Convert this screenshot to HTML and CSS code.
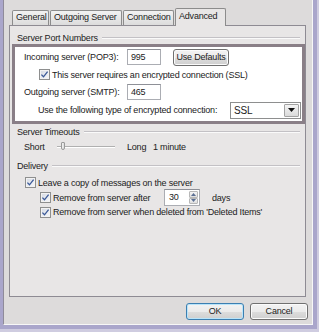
FILE: index.html
```html
<!DOCTYPE html>
<html lang="en">
<head>
    <meta charset="UTF-8">
    <meta name="viewport" content="width=device-width, initial-scale=1.0">
    <title>Advanced</title>
    <link rel="stylesheet" href="styles.css">
</head>
<body>
    <div class="frame">
        <div class="window">
            <div class="client">
                <div class="tabs">
                    <div class="tab tab-general">General</div>
                    <div class="tab tab-outgoing">Outgoing Server</div>
                    <div class="tab tab-connection">Connection</div>
                    <div class="tab tab-advanced active">Advanced</div>
                </div>

                <div class="page">
                    <div class="group-title"><span>Server Port Numbers</span><div class="rule"></div></div>
                    <div class="highlight">
                        <div class="hl-row r-incoming">
                            <span class="port-label">Incoming server (POP3):</span>
                            <span class="field">995</span>
                            <span class="btn btn-defaults">Use Defaults</span>
                        </div>
                        <div class="hl-row r-ssl">
                            <span class="box"><svg width="9" height="9" viewBox="0 0 9 9"><path d="M1.4 4.6 L3.5 6.8 L7.6 1.6" fill="none" stroke="#3c5a98" stroke-width="1.3"/></svg></span>
                            <span>This server requires an encrypted connection (SSL)</span>
                        </div>
                        <div class="hl-row r-outgoing">
                            <span class="port-label">Outgoing server (SMTP):</span>
                            <span class="field">465</span>
                        </div>
                        <div class="hl-row r-type">
                            <span>Use the following type of encrypted connection:</span>
                            <span class="select">
                                <span class="select-val">SSL</span>
                                <span class="select-arrow"><svg width="7" height="4" viewBox="0 0 7 4"><path d="M0 0 H7 L3.5 4 Z" fill="#111"/></svg></span>
                            </span>
                        </div>
                    </div>

                    <div class="group-title gt-timeouts"><span>Server Timeouts</span><div class="rule"></div></div>
                    <div class="timeouts">
                        <span class="t-short">Short</span>
                        <div class="track"><span class="thumb"></span></div>
                        <span class="t-long">Long</span>
                        <span>1 minute</span>
                    </div>

                    <div class="group-title gt-delivery"><span>Delivery</span><div class="rule"></div></div>
                    <div class="check-row dl-leave">
                        <span class="box"><svg width="9" height="9" viewBox="0 0 9 9"><path d="M1.4 4.6 L3.5 6.8 L7.6 1.6" fill="none" stroke="#3c5a98" stroke-width="1.3"/></svg></span>
                        <span>Leave a copy of messages on the server</span>
                    </div>
                    <div class="check-row dl-after">
                        <span class="box"><svg width="9" height="9" viewBox="0 0 9 9"><path d="M1.4 4.6 L3.5 6.8 L7.6 1.6" fill="none" stroke="#3c5a98" stroke-width="1.3"/></svg></span>
                        <span class="after-label">Remove from server after</span>
                        <span class="spin">
                            <span class="spin-val">30</span>
                            <span class="spin-btns">
                                <span class="spin-btn"><svg width="5" height="3" viewBox="0 0 5 3"><path d="M0 3 H5 L2.5 0 Z" fill="#5b6f93"/></svg></span>
                                <span class="spin-btn"><svg width="5" height="3" viewBox="0 0 5 3"><path d="M0 0 H5 L2.5 3 Z" fill="#5b6f93"/></svg></span>
                            </span>
                        </span>
                        <span class="days">days</span>
                    </div>
                    <div class="check-row dl-deleted">
                        <span class="box"><svg width="9" height="9" viewBox="0 0 9 9"><path d="M1.4 4.6 L3.5 6.8 L7.6 1.6" fill="none" stroke="#3c5a98" stroke-width="1.3"/></svg></span>
                        <span>Remove from server when deleted from 'Deleted Items'</span>
                    </div>
                </div>

                <div class="actions">
                    <span class="btn btn-dialog btn-ok">OK</span>
                    <span class="btn btn-dialog">Cancel</span>
                </div>
            </div>
        </div>
    </div>
</body>
</html>
```

FILE: styles.css
```css
* {
    box-sizing: border-box;
}
body {
    margin: 0;
    font-family: "Liberation Sans", Arial, sans-serif;
    font-size: 9px;
    letter-spacing: -0.2px;
    color: #222;
}
.frame {
    width: 319px;
    height: 332px;
    background-color: #cfcce0;
    padding: 0 2px 3px 0;
}
.window {
    height: 100%;
    background-color: #aaa6cb;
    padding: 0 4px 4px 3px;
}
.client {
    height: 100%;
    background-color: #dddbdb;
    border-left: 1px solid #8f8b99;
    border-right: 1px solid #f7f7f7;
    border-bottom: 1px solid #f7f7f7;
    padding: 8px 0 0 5px;
}

/* tabs */
.tabs {
    display: flex;
    align-items: flex-end;
    height: 17px;
    padding-left: 3px;
}
.tab {
    height: 15px;
    margin-right: 1px;
    padding: 0 3px;
    border: 1px solid #8c8c8c;
    border-bottom: none;
    border-radius: 2px 2px 0 0;
    background: linear-gradient(#f2f2f2, #dcdcdc);
    line-height: 13px;
    white-space: nowrap;
}
.tab-general { width: 37px; }
.tab-outgoing { width: 72px; }
.tab-connection { width: 51px; }
.tab.active {
    position: relative;
    z-index: 1;
    width: 51px;
    height: 18px;
    margin-bottom: -1px;
    background: #e8e6e6;
    line-height: 15px;
}

/* tab page */
.page {
    width: 297px;
    height: 272px;
    border: 1px solid #8e8b93;
    background-color: #e8e6e6;
    padding-top: 6px;
}
.group-title {
    display: flex;
    align-items: center;
    height: 11px;
    padding-left: 7px;
    white-space: nowrap;
}
.group-title .rule {
    flex: 1;
    margin: 0 5px 0 4px;
    border-top: 1px solid #c3c1c5;
    border-bottom: 1px solid #fafafa;
}
.gt-timeouts { margin-top: 2px; }
.gt-delivery { margin-top: 7px; }

.highlight {
    width: 293px;
    margin: 1px 0 0 2px;
    border: 3px solid #8a7f87;
    background-color: #fff;
    padding: 1px 0 2px 0;
}
.hl-row {
    display: flex;
    align-items: center;
    padding-left: 9px;
    white-space: nowrap;
}
.r-incoming { height: 18px; }
.r-ssl { height: 17px; padding-left: 24px; }
.r-outgoing { height: 18px; }
.r-type { height: 18px; padding-left: 23px; }
.port-label {
    width: 103px;
}
.field {
    width: 34px;
    height: 16px;
    border: 1px solid #abadb3;
    border-top-color: #8e9097;
    background-color: #fff;
    padding-left: 3px;
    line-height: 14px;
}

.btn {
    display: block;
    height: 17px;
    border: 1px solid #707070;
    border-radius: 3px;
    background: linear-gradient(#f3f3f3 0%, #ebebeb 50%, #dddddd 51%, #cfcfcf 100%);
    box-shadow: inset 0 0 0 1px #fbfbfb;
    text-align: center;
    line-height: 15px;
}
.btn-defaults {
    width: 56px;
    margin-left: 12px;
}

.select {
    display: flex;
    align-items: center;
    width: 71px;
    height: 17px;
    margin-left: auto;
    margin-right: 1px;
    padding: 1px;
    border: 1px solid #8e8f8f;
    background-color: #fff;
}
.select-val {
    flex: 1;
    padding-left: 2px;
    font-size: 10px;
}
.select-arrow {
    display: flex;
    align-items: center;
    justify-content: center;
    width: 15px;
    height: 13px;
    border: 1px solid #a3a3a3;
    border-radius: 1px;
    background: linear-gradient(#f4f4f4, #dadada);
}

/* checkbox */
.box {
    display: flex;
    align-items: center;
    justify-content: center;
    width: 11px;
    height: 11px;
    margin-right: 2px;
    border: 1px solid #8e8f8f;
    background: linear-gradient(135deg, #d4d9e3, #f7f8fa);
    box-shadow: inset 0 0 0 1px #f2f2f2;
}

/* timeouts slider */
.timeouts {
    display: flex;
    align-items: center;
    height: 12px;
    margin-top: 4px;
    padding-left: 14px;
    white-space: nowrap;
}
.t-short { width: 33px; }
.track {
    position: relative;
    width: 58px;
    height: 2px;
    border-top: 1px solid #b0b0b0;
    border-bottom: 1px solid #fff;
}
.thumb {
    position: absolute;
    left: 4px;
    top: -5px;
    width: 4px;
    height: 8px;
    border: 1px solid #9a9a9a;
    border-radius: 1px 1px 2px 2px;
    background: linear-gradient(90deg, #f4f4f4, #dadada);
}
.t-long {
    width: 26px;
    margin-left: 12px;
}

/* delivery */
.check-row {
    display: flex;
    align-items: center;
    white-space: nowrap;
}
.dl-leave { height: 13px; margin-top: 5px; padding-left: 15px; }
.dl-after { height: 17px; padding-left: 30px; }
.dl-deleted { height: 12px; padding-left: 30px; }
.after-label { width: 111px; }
.spin {
    display: flex;
    width: 36px;
    height: 17px;
    border: 1px solid #abadb3;
    border-top-color: #8e9097;
    background-color: #fff;
}
.spin-val {
    flex: 1;
    padding-left: 4px;
    line-height: 15px;
}
.spin-btns {
    display: flex;
    flex-direction: column;
    width: 10px;
    padding: 1px 1px 1px 0;
}
.spin-btn {
    display: flex;
    align-items: center;
    justify-content: center;
    flex: 1;
    border: 1px solid #b7b7b7;
    border-radius: 1px;
    background: linear-gradient(#f5f5f5, #dedede);
}
.days { margin-left: 12px; }

/* dialog buttons */
.actions {
    display: flex;
    justify-content: flex-end;
    gap: 6px;
    width: 299px;
    margin-top: 6px;
}
.btn-dialog {
    width: 58px;
}
.btn-ok {
    border-color: #3c7fb1;
    box-shadow: inset 0 0 0 1px #b9e4fa;
}
```
